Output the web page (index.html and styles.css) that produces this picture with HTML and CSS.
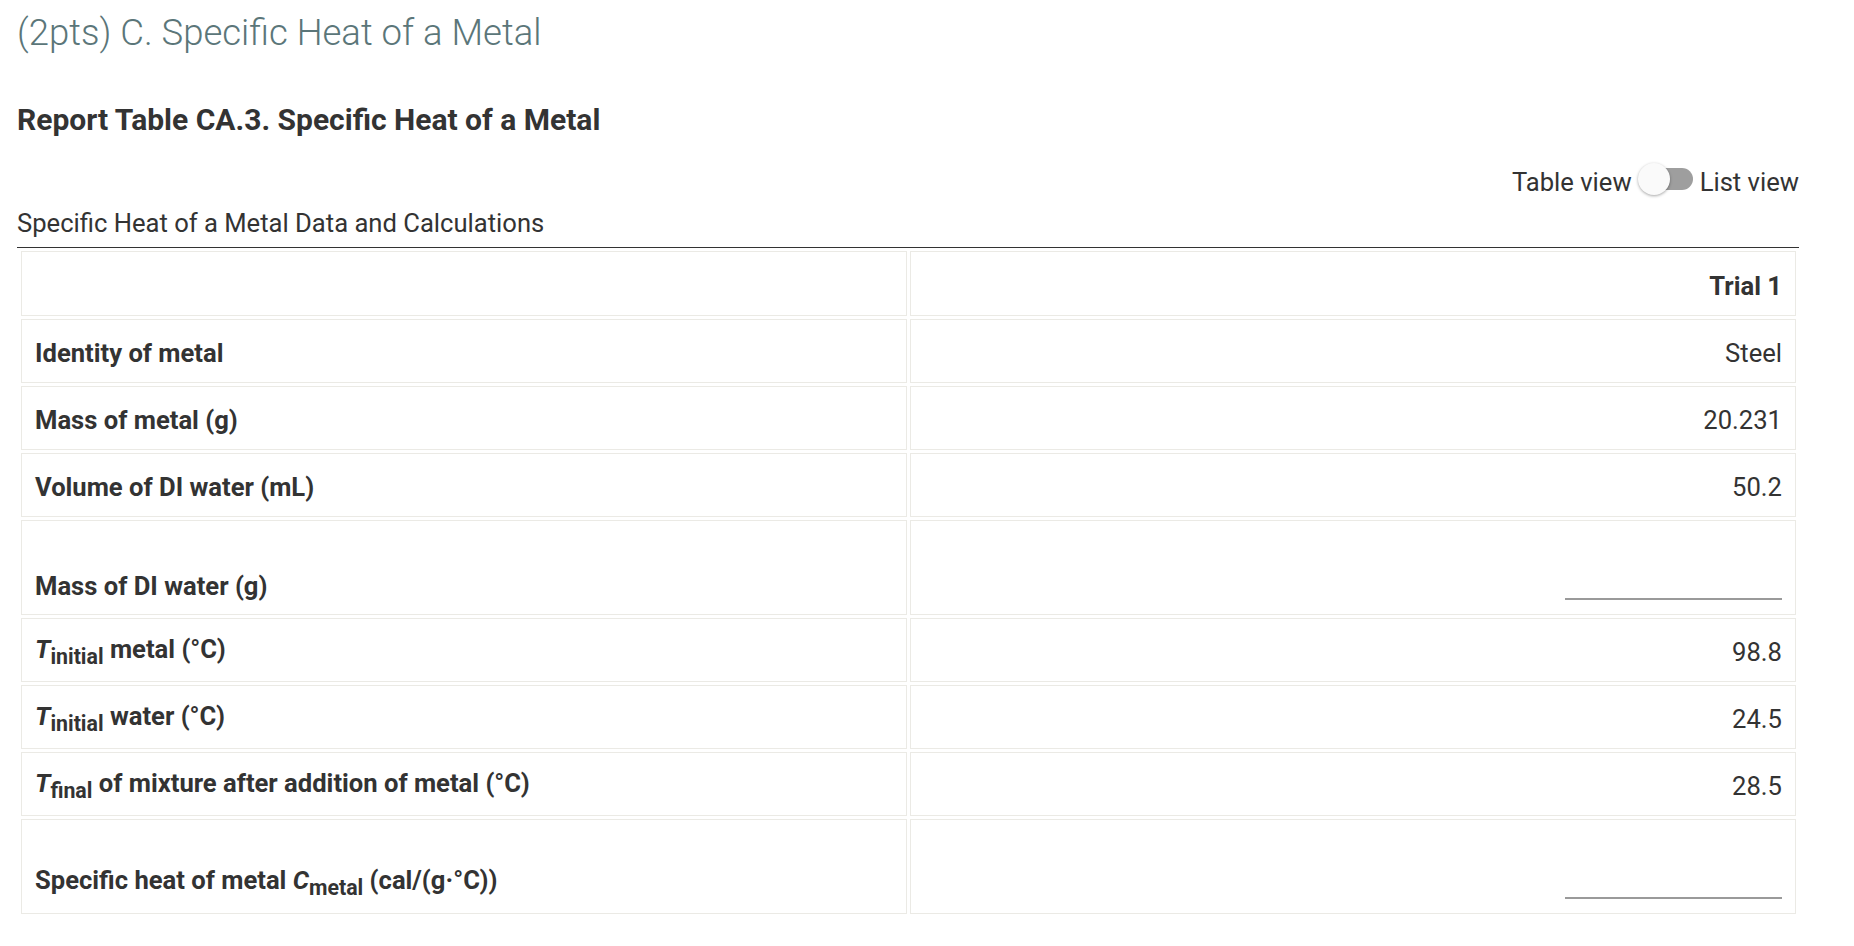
FILE: index.html
```html
<!DOCTYPE html>
<html lang="en">
<head>
    <meta charset="UTF-8">
    <meta name="viewport" content="width=device-width, initial-scale=1.0">
    <title>Specific Heat of a Metal</title>
    <link rel="stylesheet" href="styles.css">
</head>
<body>
    <div class="page">
        <h2 class="part-title">(2pts) C. Specific Heat of a Metal</h2>
        <h3 class="report-title">Report Table CA.3. Specific Heat of a Metal</h3>

        <div class="view-switch">
            <span>Table view</span>
            <span class="toggle"><span class="toggle-knob"></span></span>
            <span>List view</span>
        </div>

        <div class="table-caption">Specific Heat of a Metal Data and Calculations</div>

        <table class="data-table">
            <colgroup>
                <col class="col-label">
                <col class="col-value">
            </colgroup>
            <thead>
                <tr>
                    <th class="label"></th>
                    <th class="value">Trial 1</th>
                </tr>
            </thead>
            <tbody>
                <tr>
                    <th class="label">Identity of metal</th>
                    <td class="value">Steel</td>
                </tr>
                <tr>
                    <th class="label">Mass of metal (g)</th>
                    <td class="value">20.231</td>
                </tr>
                <tr>
                    <th class="label">Volume of DI water (mL)</th>
                    <td class="value">50.2</td>
                </tr>
                <tr class="tall">
                    <th class="label">Mass of DI water (g)</th>
                    <td class="value"><input class="answer" type="text" aria-label="Mass of DI water (g)"></td>
                </tr>
                <tr>
                    <th class="label"><i>T</i><sub>initial</sub> metal (°C)</th>
                    <td class="value">98.8</td>
                </tr>
                <tr>
                    <th class="label"><i>T</i><sub>initial</sub> water (°C)</th>
                    <td class="value">24.5</td>
                </tr>
                <tr>
                    <th class="label"><i>T</i><sub>final</sub> of mixture after addition of metal (°C)</th>
                    <td class="value">28.5</td>
                </tr>
                <tr class="tall">
                    <th class="label">Specific heat of metal <i>C</i><sub>metal</sub> (cal/(g·°C))</th>
                    <td class="value"><input class="answer" type="text" aria-label="Specific heat of metal"></td>
                </tr>
            </tbody>
        </table>
    </div>
</body>
</html>
```

FILE: styles.css
```css
body {
    margin: 0;
    background-color: #ffffff;
    color: #333333;
    font-family: Roboto, "Liberation Sans", Arial, sans-serif;
    font-size: 25.6px;
}

.page {
    width: 1782px;
    padding: 12px 0 0 17px;
}

.part-title {
    margin: 0;
    font-size: 36.5px;
    line-height: 42px;
    font-weight: 300;
    color: #5b7679;
}

.report-title {
    margin: 48px 0 0 0;
    font-size: 30px;
    line-height: 35px;
    font-weight: 700;
    color: #333333;
}

.view-switch {
    display: flex;
    justify-content: flex-end;
    align-items: flex-start;
    gap: 7px;
    margin-top: 30px;
    line-height: 30px;
}

.toggle {
    position: relative;
    width: 54px;
    height: 22px;
    margin-top: 1px;
    border-radius: 11px;
    background-color: #9e9e9e;
}

.toggle-knob {
    position: absolute;
    left: -1px;
    top: -5px;
    width: 32px;
    height: 32px;
    border-radius: 50%;
    background-color: #fafafa;
    box-shadow: 0 1px 3px rgba(0, 0, 0, 0.35);
}

.table-caption {
    margin-top: 11px;
    padding-bottom: 9px;
    line-height: 30px;
    border-bottom: 1px solid #333333;
}

.data-table {
    width: 1781px;
    margin-left: 1px;
    border-collapse: separate;
    border-spacing: 3px;
    table-layout: fixed;
}

.col-label,
.col-value {
    width: 50%;
}

.data-table tr {
    height: 64px;
}

.data-table thead tr {
    height: 65px;
}

.data-table tr.tall {
    height: 95px;
}

.data-table th,
.data-table td {
    padding: 4px 13px 0 13px;
    border: 1px solid #ebeae5;
    line-height: normal;
    font-size: 25.6px;
    color: #333333;
    vertical-align: middle;
}

.data-table .label {
    text-align: left;
    font-weight: 700;
}

.data-table .value {
    text-align: right;
    font-weight: 400;
}

.data-table thead .value {
    font-weight: 700;
}

.tall th,
.tall td {
    vertical-align: bottom;
}

.tall th {
    padding-bottom: 13px;
}

.tall td {
    padding-bottom: 10px;
}

.answer {
    display: block;
    width: 217px;
    height: 67px;
    margin: 0 0 4px auto;
    padding: 0;
    border: none;
    border-bottom: 2px solid #9a9a9a;
    background: transparent;
    font: inherit;
    outline: none;
}
```
